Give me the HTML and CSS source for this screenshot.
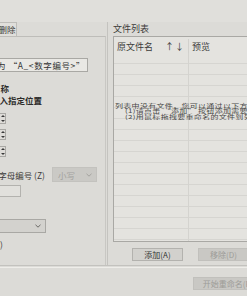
FILE: index.html
```html
<!DOCTYPE html>
<html lang="zh-CN">
<head>
<meta charset="utf-8">
<title>批量重命名</title>
<link rel="stylesheet" href="styles.css">
</head>
<body>
<div class="app">
  <div class="topbar"></div>
  <div class="main">
    <div class="left">
      <div class="left-inner">
        <div class="tabs">
          <span class="tab">插入</span>
          <span class="tab">删除</span>
        </div>
        <div class="tabpanel">
          <div class="field name-field">重命名后的文件名为 “A_&lt;数字编号&gt;”</div>
          <div class="endrow w71 heading">保留原文件名称</div>
          <div class="endrow w104 heading">插入指定位置</div>
          <div class="spin s1"><span class="spin-btns"><i class="up"></i><i class="down"></i></span></div>
          <div class="spin s2"><span class="spin-btns"><i class="up"></i><i class="down"></i></span></div>
          <div class="spin s3"><span class="spin-btns"><i class="up"></i><i class="down"></i></span></div>
          <div class="zrow">
            <span class="endrow w107">添加字母编号 (Z)</span>
            <span class="combo combo-off">小写<svg class="chev" viewBox="0 0 6 4" width="6" height="4"><path d="M0.5 0.8 L3 3.2 L5.5 0.8" fill="none" stroke="currentColor" stroke-width="1"/></svg></span>
          </div>
          <div class="box"></div>
          <div class="combo combo-on"><svg class="chev" viewBox="0 0 6 4" width="6" height="4"><path d="M0.5 0.8 L3 3.2 L5.5 0.8" fill="none" stroke="currentColor" stroke-width="1"/></svg></div>
          <div class="endrow w65 note">(例如 001)</div>
        </div>
      </div>
    </div>
    <div class="right">
      <div class="grp-label">文件列表</div>
      <div class="list">
        <div class="list-head">
          <div class="col1"><span>原文件名</span><span class="sort">↑↓</span></div>
          <div class="col2">预览</div>
        </div>
        <div class="list-body">
          <div class="msg">
            <div>列表中没有文件，您可以通过以下方式添加文件：</div>
            <div class="ind">(1)请点击 “添加” 按钮添加需要重命名的文件；</div>
            <div class="ind">(2)用鼠标拖拽要重命名的文件到列表中。</div>
          </div>
        </div>
      </div>
      <div class="btnrow">
        <button class="btn">添加(A)</button>
        <button class="btn btn-off">移除(D)</button>
      </div>
    </div>
  </div>
  <div class="sep"></div>
  <div class="bottom">
    <button class="btn btn-off start">开始重命名(R)</button>
  </div>
</div>
</body>
</html>
```

FILE: styles.css
```css
html, body {
  margin: 0;
  padding: 0;
}
body {
  width: 247px;
  height: 296px;
  overflow: hidden;
  background: #dcdbd7;
  font-family: "Noto Sans CJK SC", "Noto Sans", sans-serif;
  font-size: 8.5px;
  color: #3c3c3a;
}
.app {
  display: flex;
  flex-direction: column;
  height: 296px;
}
.topbar {
  height: 22px;
  flex: none;
  background: #e0dfdb;
}
.main {
  display: flex;
  gap: 5px;
  height: 243px;
  flex: none;
}

/* left settings panel (clipped on the left) */
.left {
  width: 107px;
  flex: none;
  border-right: 1px solid #c4c3bf;
  overflow: hidden;
}
.left-inner {
  margin-left: -62px;
  width: 168px;
  height: 100%;
  display: flex;
  flex-direction: column;
}
.tabs {
  display: flex;
  height: 14px;
  padding-left: 38px;
  flex: none;
}
.tab {
  box-sizing: border-box;
  width: 22px;
  height: 14px;
  border: 1px solid #bebdb9;
  border-bottom: none;
  background: #e0dfdb;
  line-height: 12px;
  text-align: center;
  white-space: nowrap;
}
.tab + .tab {
  width: 19px;
  border-left: none;
}
.tabpanel {
  flex: 1;
  border-top: 1px solid #bebdb9;
  border-right: 1px solid #c8c7c3;
  display: flex;
  flex-direction: column;
}
.field {
  box-sizing: border-box;
  background: #e9e8e4;
  border: 1px solid #a9a8a4;
}
.name-field {
  margin: 21px 0 0 2px;
  width: 148px;
  height: 14px;
  display: flex;
  justify-content: flex-end;
  align-items: center;
  padding-right: 2px;
  white-space: nowrap;
  overflow: hidden;
  color: #333;
  letter-spacing: 0.6px;
}
.endrow {
  display: flex;
  justify-content: flex-end;
  white-space: nowrap;
  height: 10px;
  line-height: 10px;
}
.w71 { width: 71px; margin-top: 11px; }
.w104 { width: 104px; margin-top: 2px; }
.w107 { width: 107px; }
.w65 { width: 65px; margin-top: 6px; }
.heading {
  font-weight: 700;
  color: #2c2c2a;
}
.spin {
  box-sizing: border-box;
  width: 40px;
  height: 11px;
  margin-left: 28px;
  border: 1px solid #a9a8a4;
  background: #e9e8e4;
  display: flex;
}
.s1 { margin-top: 8px; }
.s2 { margin-top: 5px; }
.s3 { margin-top: 6px; }
.spin-btns {
  margin-left: auto;
  width: 5px;
  border-left: 1px solid #bcbbb7;
  background: #dedcd8;
  display: flex;
  flex-direction: column;
  justify-content: space-around;
  align-items: center;
}
.up {
  display: block;
  width: 0;
  height: 0;
  border-left: 2px solid transparent;
  border-right: 2px solid transparent;
  border-bottom: 2px solid #3a3a3a;
}
.down {
  display: block;
  width: 0;
  height: 0;
  border-left: 2px solid transparent;
  border-right: 2px solid transparent;
  border-top: 2px solid #3a3a3a;
}
.zrow {
  margin-top: 10px;
  height: 15px;
  display: flex;
  align-items: center;
}
.combo {
  box-sizing: border-box;
  height: 15px;
  display: flex;
  align-items: center;
  white-space: nowrap;
}
.combo-off {
  margin-left: 7px;
  width: 45px;
  padding-left: 5px;
  background: #cac9c5;
  border: 1px solid #c3c2be;
  color: #a3a29e;
}
.combo-on {
  margin: 22px 0 0 48px;
  width: 60px;
  height: 14px;
  background: #d3d2ce;
  border: 1px solid #a9a8a4;
  color: #6a6966;
}
.chev {
  margin-left: auto;
  margin-right: 4px;
  display: block;
}
.box {
  box-sizing: border-box;
  margin: 3px 0 0 43px;
  width: 40px;
  height: 12px;
  border: 1px solid #b3b2ae;
  background: #e1e0dc;
}

/* right: file list */
.right {
  flex: 1;
  min-width: 0;
  overflow: hidden;
  display: flex;
  flex-direction: column;
}
.grp-label {
  margin-top: 2px;
  height: 10px;
  line-height: 10px;
  font-size: 9px;
  white-space: nowrap;
}
.list {
  box-sizing: border-box;
  margin-top: 2px;
  width: 160px;
  height: 206px;
  flex: none;
  border: 1px solid #a9a8a4;
  background: #e4e3df;
  display: flex;
  flex-direction: column;
}
.list-head {
  height: 16px;
  flex: none;
  display: flex;
  align-items: center;
  padding-top: 2px;
  box-sizing: border-box;
  white-space: nowrap;
  font-size: 9px;
}
.col1 {
  box-sizing: border-box;
  width: 75px;
  height: 14px;
  padding-left: 3px;
  display: flex;
  align-items: center;
  border-right: 1px solid #d2d1cd;
}
.sort {
  margin-left: 12px;
  letter-spacing: 1px;
}
.col2 {
  padding-left: 3px;
}
.list-body {
  flex: 1;
  overflow: hidden;
  padding: 50px 0 0 1px;
  background:
    linear-gradient(to right, transparent 74px, #d4d3cf 74px, #d4d3cf 75px, transparent 75px),
    repeating-linear-gradient(to bottom, transparent 0, transparent 10px, #d6d5d1 10px, #d6d5d1 11px);
}
.msg {
  line-height: 8px;
  white-space: nowrap;
  color: #4a4a48;
  font-size: 8px;
  letter-spacing: 0.3px;
  transform: scaleY(0.68);
  transform-origin: top left;
}
.ind {
  padding-left: 10px;
}
.btnrow {
  margin-top: 6px;
  padding-left: 19px;
  display: flex;
  gap: 15px;
  flex: none;
}
.btn {
  box-sizing: border-box;
  width: 51px;
  height: 13px;
  flex: none;
  padding: 0;
  margin: 0;
  font-family: inherit;
  font-size: 8px;
  line-height: 11px;
  border: 1px solid #b3b2ae;
  background: #d2d1cd;
  color: #333;
  white-space: nowrap;
}
.btn-off {
  background: #c9c8c4;
  border-color: #c1c0bc;
  color: #9d9c98;
}
.sep {
  height: 1px;
  flex: none;
  border-top: 1px solid #c3c2be;
  border-bottom: 1px solid #eeede9;
}
.bottom {
  flex: 1;
  display: flex;
  align-items: flex-start;
  padding: 9px 0 0 193px;
  overflow: hidden;
}
.start {
  width: 70px;
}
```
